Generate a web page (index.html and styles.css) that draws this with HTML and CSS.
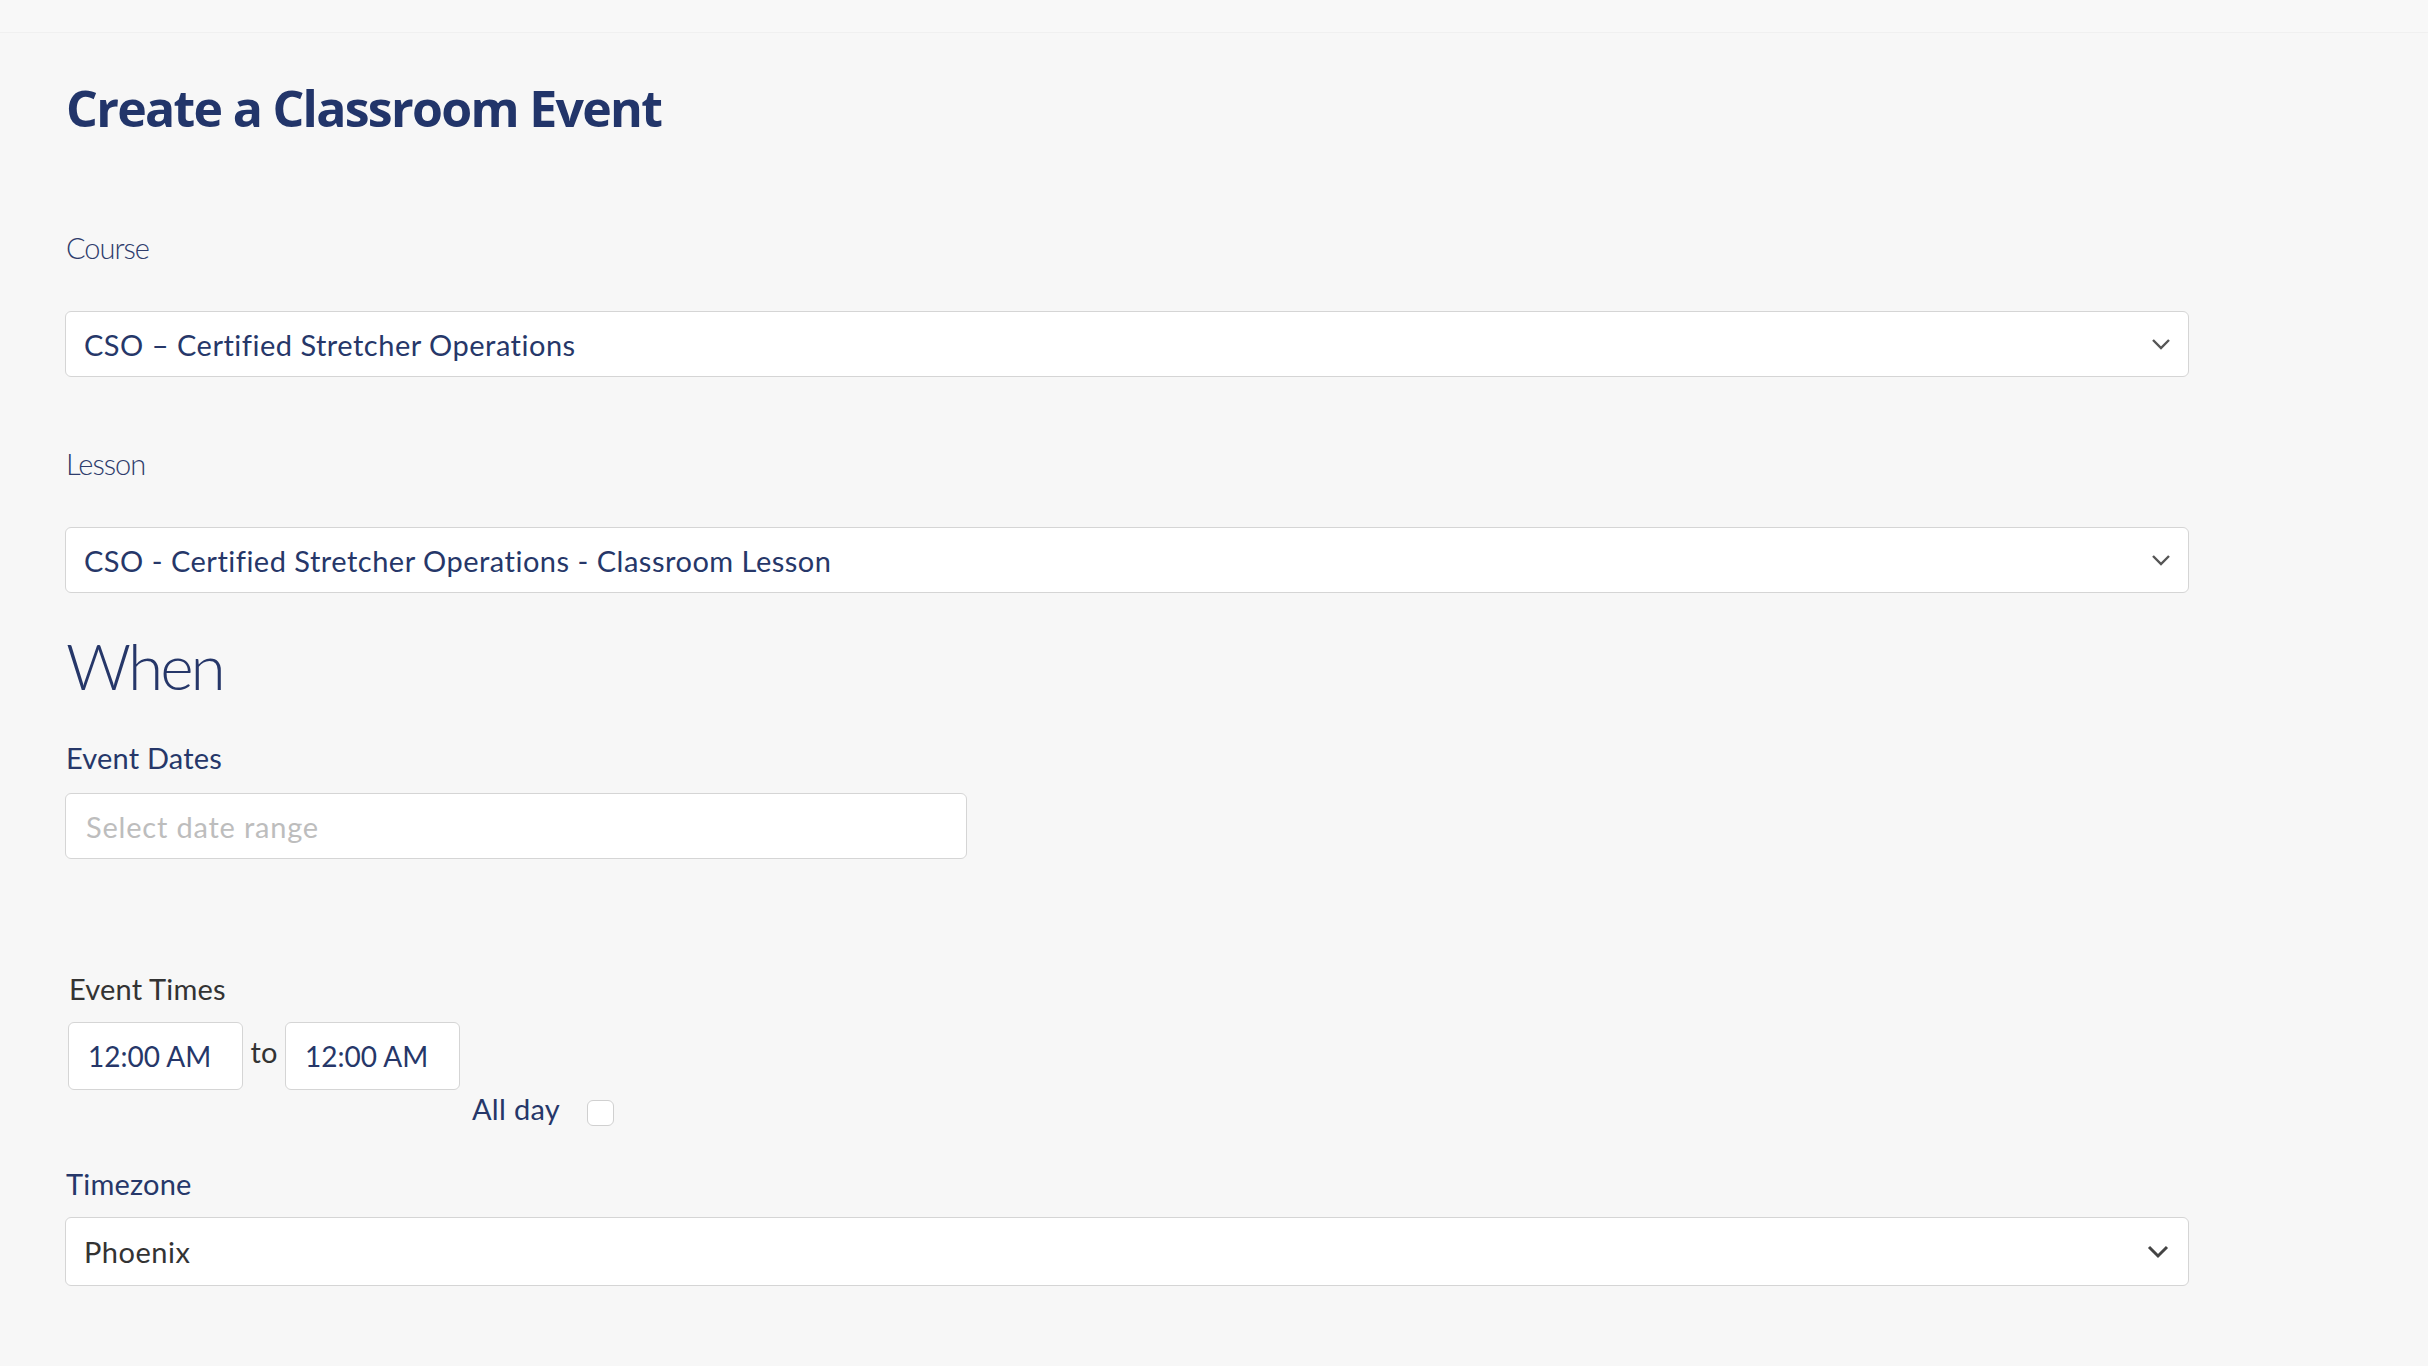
FILE: index.html
```html
<!DOCTYPE html>
<html lang="en">
<head>
<meta charset="utf-8">
<title>Create a Classroom Event</title>
<link rel="stylesheet" href="styles.css">
</head>
<body>
<div class="topbar"></div>
<main class="page">
  <h1 class="title">Create a Classroom Event</h1>

  <div class="field">
    <div class="label-light">Course</div>
    <div class="select">
      <span class="select-text">CSO – Certified Stretcher Operations</span>
      <svg class="chev" width="20" height="12" viewBox="0 0 20 12"><polyline points="2,2 10,10 18,2" fill="none" stroke="#555" stroke-width="2.4"/></svg>
    </div>
  </div>

  <div class="field field-lesson">
    <div class="label-light">Lesson</div>
    <div class="select">
      <span class="select-text">CSO - Certified Stretcher Operations - Classroom Lesson</span>
      <svg class="chev" width="20" height="12" viewBox="0 0 20 12"><polyline points="2,2 10,10 18,2" fill="none" stroke="#555" stroke-width="2.4"/></svg>
    </div>
  </div>

  <h2 class="when">When</h2>

  <div class="label">Event Dates</div>
  <div class="date-input"><span class="placeholder">Select date range</span></div>

  <section class="times">
    <div class="label label-dark">Event Times</div>
    <div class="times-row">
      <div class="time-input">12:00 AM</div>
      <span class="to">to</span>
      <div class="time-input">12:00 AM</div>
      <div class="allday">
        <span class="allday-text">All day</span>
        <span class="checkbox"></span>
      </div>
    </div>
  </section>

  <div class="label tz-label">Timezone</div>
  <div class="select select-tz">
    <span class="select-text dark">Phoenix</span>
    <svg class="chev chev-tz" width="22" height="14" viewBox="0 0 22 14"><polyline points="2,2 11,11 20,2" fill="none" stroke="#444" stroke-width="3"/></svg>
  </div>
</main>
</body>
</html>
```

FILE: styles.css
```css
html, body {
  margin: 0;
  padding: 0;
  background: #f7f7f7;
}

body {
  font-family: Lato, "Open Sans", "Liberation Sans", sans-serif;
  color: #263769;
}

.topbar {
  height: 32px;
  border-bottom: 1px solid #f0f0f0;
  background: #f8f8f8;
}

.page {
  padding: 0 239px 80px 65px;
}

.title {
  margin: 45px 0 0 1px;
  font-family: "Open Sans", Lato, sans-serif;
  font-weight: 700;
  font-size: 50px;
  line-height: 60px;
  color: #22356a;
  letter-spacing: -1.7px;
}

.field {
  margin-top: 92px;
}

.field-lesson {
  margin-top: 69px;
}

.label-light {
  margin-left: 1px;
  font-weight: 300;
  font-size: 29px;
  line-height: 35px;
  color: #2e3c6c;
  letter-spacing: -1px;
}

.select {
  margin-top: 46px;
  height: 64px;
  border: 1px solid #d5d5d5;
  border-radius: 6px;
  background: #fff;
  display: flex;
  align-items: center;
  justify-content: space-between;
  padding: 0 17px 0 18px;
}

.select-text {
  font-size: 29px;
  letter-spacing: 0.5px;
  color: #263769;
}

.select-text.dark {
  color: #333;
}

.chev {
  display: block;
}

.when {
  margin: 34px 0 0 1px;
  font-weight: 300;
  font-size: 64px;
  line-height: 77px;
  color: #263769;
  letter-spacing: -3px;
}

.label {
  margin: 36px 0 0 1px;
  font-weight: 400;
  font-size: 29px;
  line-height: 35px;
  color: #263769;
  letter-spacing: 0.2px;
}

.label-dark {
  color: #333;
}

.date-input {
  margin-top: 18px;
  width: 880px;
  height: 64px;
  border: 1px solid #d5d5d5;
  border-radius: 6px;
  background: #fff;
  display: flex;
  align-items: center;
  padding: 0 0 0 20px;
}

.placeholder {
  font-size: 29px;
  letter-spacing: 0.8px;
  color: #bdbdbd;
}

.times {
  margin: 112px 0 0 3px;
}

.times .label {
  margin-top: 0;
}

.times-row {
  margin-top: 16px;
  display: flex;
  align-items: flex-start;
}

.time-input {
  width: 154px;
  height: 66px;
  border: 1px solid #d5d5d5;
  border-radius: 6px;
  background: #fff;
  padding-left: 19px;
  display: flex;
  align-items: center;
  font-size: 28px;
  color: #263769;
}

.to {
  margin: 12px 0 0;
  width: 42px;
  text-align: center;
  font-size: 29px;
  line-height: 35px;
  color: #333;
}

.allday {
  margin: 68px 0 0 12px;
  display: flex;
  align-items: center;
  gap: 27px;
}

.allday-text {
  font-size: 29px;
  line-height: 35px;
  letter-spacing: 0.3px;
  color: #263769;
}

.checkbox {
  margin-top: 10px;
  width: 25px;
  height: 24px;
  border: 1px solid #d0d0d0;
  border-radius: 6px;
  background: #fff;
}

.tz-label {
  margin-top: 40px;
}

.select-tz {
  margin-top: 16px;
  height: 67px;
  padding-right: 19px;
}
```
